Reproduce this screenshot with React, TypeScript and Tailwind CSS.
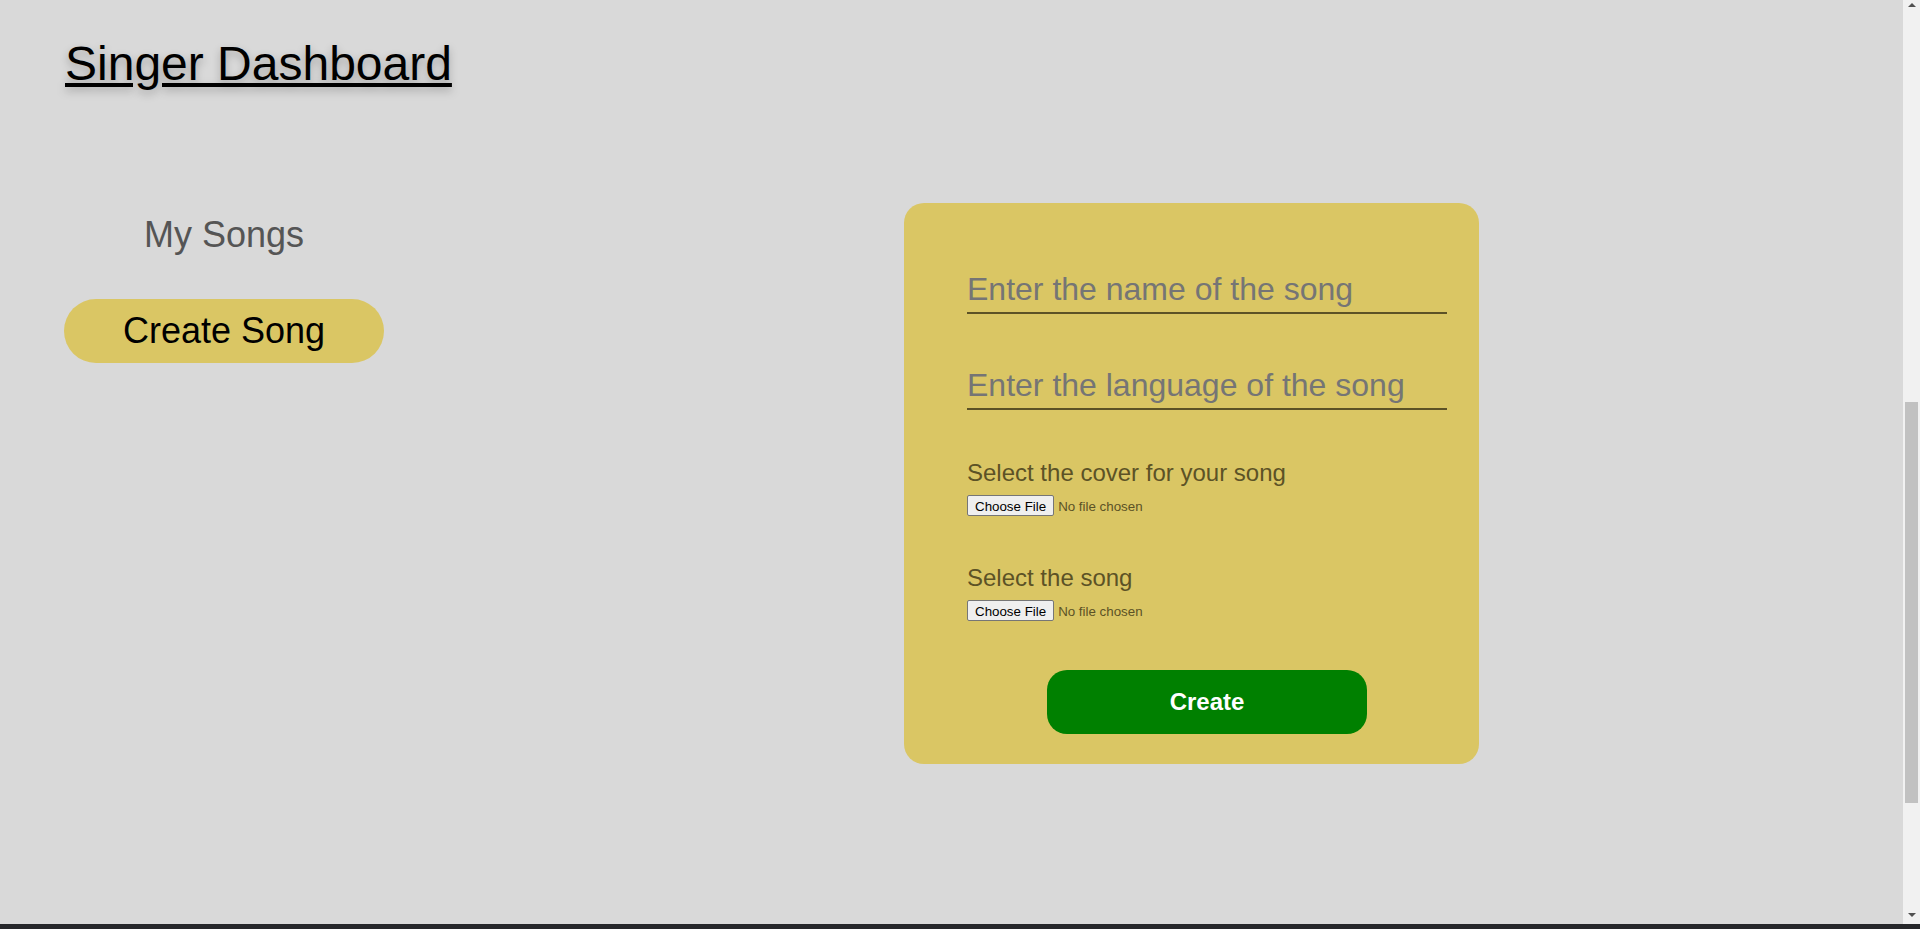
import React from 'react';

const Scrollbar: React.FC = () => (
    <div className="w-[17px] shrink-0 bg-[#f1f1f1] flex flex-col">
        <div className="h-[12px] flex items-start justify-center pt-[3px]">
            <svg width="8" height="4" viewBox="0 0 8 4"><path d="M0 4 L4 0 L8 4 Z" fill="#505050" /></svg>
        </div>
        <div className="flex-1 flex flex-col">
            <div className="mt-[390px] mx-[2px] h-[401px] bg-[#c1c1c1]" />
        </div>
        <div className="h-[14px] flex items-start justify-center pt-[3px]">
            <svg width="8" height="4" viewBox="0 0 8 4"><path d="M0 0 L8 0 L4 4 Z" fill="#505050" /></svg>
        </div>
    </div>
);

const FileField: React.FC<{ label: string; className?: string }> = ({ label, className }) => (
    <div className={className}>
        <label className="block text-[24px] leading-[28px] text-[#5c5226]">{label}</label>
        <input
            type="file"
            className="mt-[8px] block h-[22px] text-[13.33px] leading-[22px] text-[#5c5226] file:h-[21px] file:px-[7px] file:mr-[4px] file:bg-[#efefef] file:text-black file:border file:border-solid file:border-[#767676] file:rounded-[2px]"
        />
    </div>
);

export default function App() {
    return (
        <div className="h-[929px] flex flex-col overflow-hidden font-['Liberation_Sans',Arial,sans-serif]">
            <div className="flex-1 flex min-h-0">
                <div className="flex-1 bg-[#d9d9d9]">
                    <header className="pt-[36px] pl-[65px]">
                        <h1 className="text-[48px] leading-[55px] text-black underline [text-shadow:0_4px_8px_rgba(0,0,0,0.25)]">Singer Dashboard</h1>
                    </header>

                    <div className="mt-[112px] flex">
                        <aside className="w-[480px] shrink-0 pl-[64px] pt-[11px]">
                            <div className="w-[320px] flex flex-col items-center">
                                <button className="text-[36px] leading-[41px] text-[#555555]">My Songs</button>
                                <button className="mt-[44px] w-[320px] h-[64px] rounded-full bg-[#dac664] text-[36px] text-black">Create Song</button>
                            </div>
                        </aside>

                        <main className="flex-1 flex justify-center">
                            <form className="w-[575px] bg-[#dac664] rounded-[20px] pt-[64px] pb-[30px] pl-[63px]" onSubmit={e => e.preventDefault()}>
                                <div className="w-[480px] flex flex-col">
                                    <input
                                        type="text"
                                        placeholder="Enter the name of the song"
                                        className="w-full py-[4px] text-[32px] leading-[37px] border-b-2 border-[#5c5226] outline-none placeholder:text-[#757575]"
                                    />
                                    <input
                                        type="text"
                                        placeholder="Enter the language of the song"
                                        className="mt-[49px] w-full py-[4px] text-[32px] leading-[37px] border-b-2 border-[#5c5226] outline-none placeholder:text-[#757575]"
                                    />
                                    <FileField label="Select the cover for your song" className="mt-[49px]" />
                                    <FileField label="Select the song" className="mt-[47px]" />
                                    <div className="mt-[48px] flex justify-center">
                                        <button type="submit" className="w-[320px] h-[64px] rounded-[20px] bg-[#008000] text-white text-[24px] font-bold">Create</button>
                                    </div>
                                </div>
                            </form>
                        </main>
                    </div>
                </div>
                <Scrollbar />
            </div>
            <div className="h-[5px] bg-[#26272a]" />
        </div>
    );
}
